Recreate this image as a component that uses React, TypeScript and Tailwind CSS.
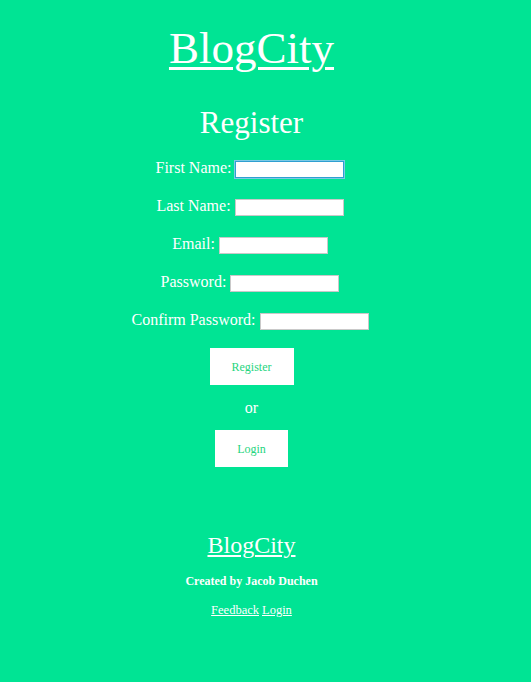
import React from 'react'

const fields = ['First Name', 'Last Name', 'Email', 'Password', 'Confirm Password']

export default function App() {
  return (
    <div className="min-h-[682px] w-full bg-[#00e494] font-['Liberation_Serif',serif] text-white">
      <div className="w-[503px] flex flex-col items-center pt-[22px]">
        <a href="#" className="text-[45px] leading-[52px] underline decoration-[3px] underline-offset-[4px]">BlogCity</a>

        <h2 className="mt-[31px] text-[31px] leading-[36px]">Register</h2>

        <div className="flex flex-col items-center gap-[18px] mt-[17px] pr-[3px]">
          {fields.map((f, i) => (
            <div key={f} className="flex items-end gap-[4px] text-[16px] leading-[20px]">
              <label>{f}:</label>
              <input
                type={f.includes('Password') ? 'password' : 'text'}
                className={
                  i === 0
                    ? 'w-[109px] h-[17px] bg-white border border-[#2f9fd0] shadow-[0_0_0_1px_#7cc9e6] outline-none'
                    : 'w-[109px] h-[17px] bg-white border border-[#c9c9c9] outline-none'
                }
              />
            </div>
          ))}
        </div>

        <button className="mt-[18px] h-[37px] px-[22px] bg-white text-[12px] text-[#1fd580]">Register</button>
        <p className="mt-[13px] text-[16px] leading-[20px]">or</p>
        <button className="mt-[12px] h-[37px] px-[22px] bg-white text-[12px] text-[#1fd580]">Login</button>

        <a href="#" className="mt-[64px] text-[24px] leading-[28px] underline decoration-2 underline-offset-[2px]">BlogCity</a>
        <p className="mt-[14px] text-[12px] leading-[16px] font-bold">Created by Jacob Duchen</p>
        <div className="mt-[13px] text-[12.5px] leading-[16px] flex gap-[3px]">
          <a href="#" className="underline">Feedback</a>
          <a href="#" className="underline">Login</a>
        </div>
      </div>
    </div>
  )
}
